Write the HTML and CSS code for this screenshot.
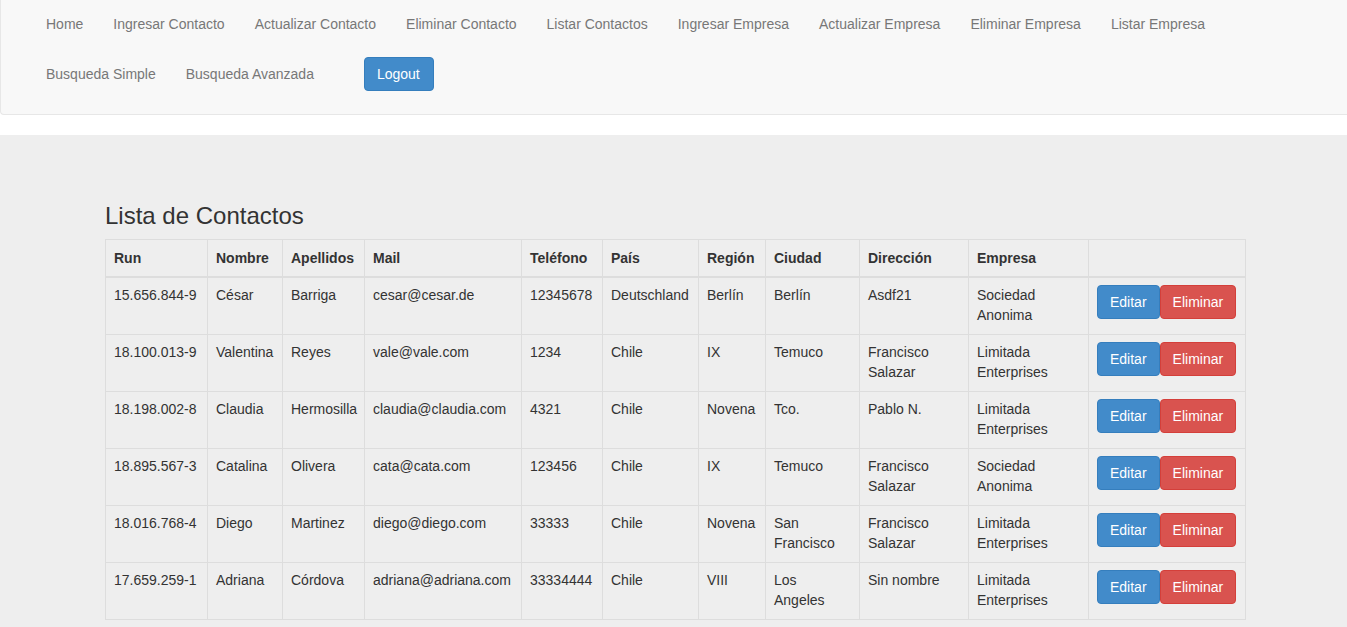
FILE: index.html
```html
<!DOCTYPE html>
<html lang="es">
<head>
<meta charset="utf-8">
<title>Lista de Contactos</title>
<link rel="stylesheet" href="styles.css">
</head>
<body>
<nav class="navbar">
  <ul class="nav">
    <li><a href="#">Home</a></li>
    <li><a href="#">Ingresar Contacto</a></li>
    <li><a href="#">Actualizar Contacto</a></li>
    <li><a href="#">Eliminar Contacto</a></li>
    <li><a href="#">Listar Contactos</a></li>
    <li><a href="#">Ingresar Empresa</a></li>
    <li><a href="#">Actualizar Empresa</a></li>
    <li><a href="#">Eliminar Empresa</a></li>
    <li><a href="#">Listar Empresa</a></li>
    <li class="break"></li>
    <li><a href="#">Busqueda Simple</a></li>
    <li><a href="#">Busqueda Avanzada</a></li>
    <li class="form"><button class="btn btn-primary">Logout</button></li>
  </ul>
</nav>
<main class="jumbotron">
  <div class="wrap">
    <h3>Lista de Contactos</h3>
    <table class="table">
      <colgroup>
        <col class="c-run"><col class="c-nom"><col class="c-ape"><col class="c-mail"><col class="c-tel"><col class="c-pais"><col class="c-reg"><col class="c-ciu"><col class="c-dir"><col class="c-emp"><col class="c-act">
      </colgroup>
      <thead>
        <tr><th>Run</th><th>Nombre</th><th>Apellidos</th><th>Mail</th><th>Teléfono</th><th>País</th><th>Región</th><th>Ciudad</th><th>Dirección</th><th>Empresa</th><th></th></tr>
      </thead>
      <tbody>
        <tr><td>15.656.844-9</td><td>César</td><td>Barriga</td><td>cesar@cesar.de</td><td>12345678</td><td>Deutschland</td><td>Berlín</td><td>Berlín</td><td>Asdf21</td><td>Sociedad Anonima</td><td><span class="acts"><button class="btn btn-primary">Editar</button><button class="btn btn-danger">Eliminar</button></span></td></tr>
        <tr><td>18.100.013-9</td><td>Valentina</td><td>Reyes</td><td>vale@vale.com</td><td>1234</td><td>Chile</td><td>IX</td><td>Temuco</td><td>Francisco Salazar</td><td>Limitada Enterprises</td><td><span class="acts"><button class="btn btn-primary">Editar</button><button class="btn btn-danger">Eliminar</button></span></td></tr>
        <tr><td>18.198.002-8</td><td>Claudia</td><td>Hermosilla</td><td>claudia@claudia.com</td><td>4321</td><td>Chile</td><td>Novena</td><td>Tco.</td><td>Pablo N.</td><td>Limitada Enterprises</td><td><span class="acts"><button class="btn btn-primary">Editar</button><button class="btn btn-danger">Eliminar</button></span></td></tr>
        <tr><td>18.895.567-3</td><td>Catalina</td><td>Olivera</td><td>cata@cata.com</td><td>123456</td><td>Chile</td><td>IX</td><td>Temuco</td><td>Francisco Salazar</td><td>Sociedad Anonima</td><td><span class="acts"><button class="btn btn-primary">Editar</button><button class="btn btn-danger">Eliminar</button></span></td></tr>
        <tr><td>18.016.768-4</td><td>Diego</td><td>Martinez</td><td>diego@diego.com</td><td>33333</td><td>Chile</td><td>Novena</td><td>San Francisco</td><td>Francisco Salazar</td><td>Limitada Enterprises</td><td><span class="acts"><button class="btn btn-primary">Editar</button><button class="btn btn-danger">Eliminar</button></span></td></tr>
        <tr><td>17.659.259-1</td><td>Adriana</td><td>Córdova</td><td>adriana@adriana.com</td><td>33334444</td><td>Chile</td><td>VIII</td><td>Los Angeles</td><td>Sin nombre</td><td>Limitada Enterprises</td><td><span class="acts"><button class="btn btn-primary">Editar</button><button class="btn btn-danger">Eliminar</button></span></td></tr>
      </tbody>
    </table>
  </div>
</main>
</body>
</html>
```
FILE: styles.css
```css
html, body {
  margin: 0;
  padding: 0;
}
body {
  font-family: "Liberation Sans", Arial, sans-serif;
  font-size: 14px;
  line-height: 20px;
  color: #333;
  background: #fff;
}
.navbar {
  background: #f8f8f8;
  border: 1px solid #e7e7e7;
  border-top: 0;
  border-right: 0;
  border-radius: 0 0 0 4px;
  margin-top: -1px;
  margin-bottom: 20px;
  padding-bottom: 15px;
}
.nav {
  list-style: none;
  margin: 0;
  padding: 0 0 0 30px;
  display: flex;
  flex-wrap: wrap;
}
.nav li a {
  display: block;
  padding: 15px;
  line-height: 20px;
  color: #777;
  text-decoration: none;
}
.nav li.break {
  flex-basis: 100%;
  height: 0;
}
.nav li.form {
  padding: 8px 0 0 35px;
}
.btn {
  font-family: "Liberation Sans", Arial, sans-serif;
  font-size: 14px;
  line-height: 20px;
  padding: 6px 12px;
  border: 1px solid transparent;
  border-radius: 4px;
  color: #fff;
  cursor: pointer;
  display: inline-block;
  vertical-align: top;
}
.nav .btn {
  padding: 6px 13px 6px 12px;
}
.btn-primary {
  background: #428bca;
  border-color: #357ebd;
}
.btn-danger {
  background: #d9534f;
  border-color: #d43f3a;
}
.jumbotron {
  background: #eeeeee;
  padding: 47px 0 30px;
  min-height: 500px;
}
.wrap {
  width: 1140px;
  margin-left: calc(50% - 568.5px);
}
h3 {
  font-size: 24px;
  font-weight: 500;
  line-height: 26px;
  margin: 21px 0 10px;
  color: #333;
}
.table {
  width: 1140px;
  table-layout: fixed;
  border-collapse: collapse;
  border-spacing: 0;
}
.table th, .table td {
  border: 1px solid #ddd;
  padding: 8px;
  text-align: left;
  vertical-align: top;
  line-height: 20px;
}
.table td {
  padding: 7px 8px 9px;
}
.table td:nth-child(8) {
  padding-right: 10px;
}
.table th {
  font-weight: bold;
}
.table thead th {
  border-bottom-width: 2px;
}
.acts {
  display: flex;
}
.c-run { width: 102px; }
.c-nom { width: 75px; }
.c-ape { width: 82px; }
.c-mail { width: 157px; }
.c-tel { width: 81px; }
.c-pais { width: 96px; }
.c-reg { width: 67px; }
.c-ciu { width: 94px; }
.c-dir { width: 109px; }
.c-emp { width: 120px; }
.c-act { width: 157px; }
```
